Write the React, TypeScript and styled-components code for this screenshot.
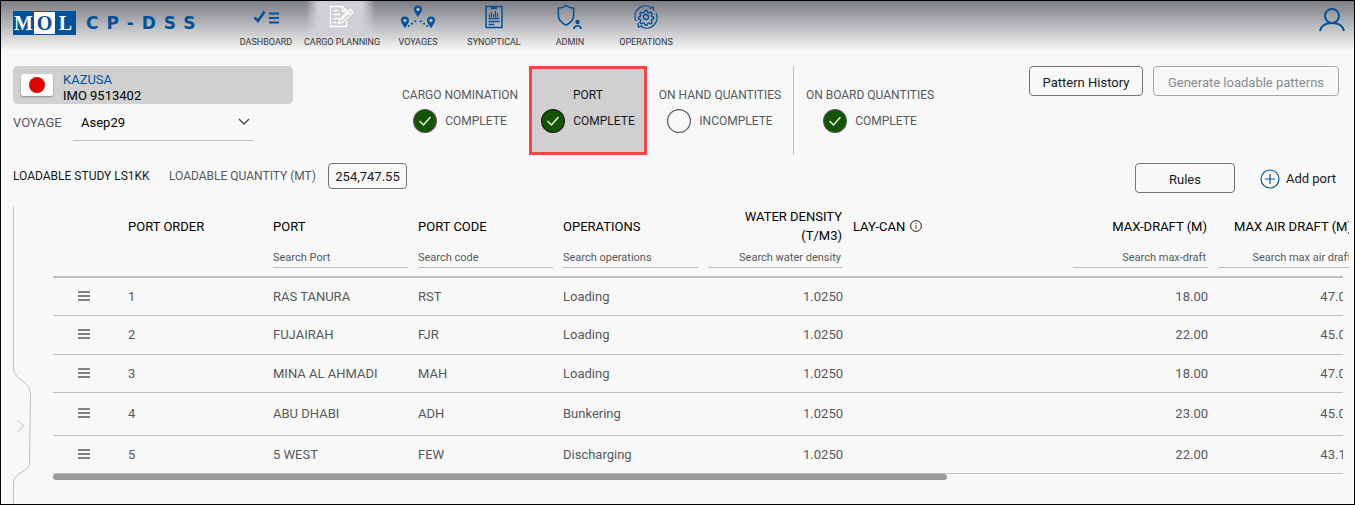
import React from "react";
import styled, { createGlobalStyle } from "styled-components";

const BLUE = "#00529c";
const LINE = "#bfbfbf";
const INK = "#16191d";
const MUTED = "#55585e";

const Global = createGlobalStyle`
  *, *::before, *::after { box-sizing: border-box; }
  body { margin: 0; background: #f8f8f8; }
  body, button, input, select { font-family: Roboto, "Liberation Sans", sans-serif; }
  body { font-size: 13px; color: ${MUTED}; }
`;

const Page = styled.div`
  min-height: 100vh;
  border: 1px solid #000;
  background: #f8f8f8;
  display: flex;
  flex-direction: column;
`;

const Header = styled.header`
  display: flex;
  align-items: flex-start;
  height: 50px;
  padding: 0 8px 0 12px;
  background: linear-gradient(to bottom, #7c7e85, #f8f8f8);
`;

const Brand = styled.a`
  display: flex;
  align-items: center;
  width: 215px;
  padding-top: 10px;
  text-decoration: none;
`;

const LogoBox = styled.span`
  display: grid;
  grid-template-columns: repeat(3, 21px);
  height: 24px;
  border: 1px solid ${BLUE};
  border-width: 1px 0;
  background: ${BLUE};
`;

const LogoLetter = styled.span<{ $inverse?: boolean }>`
  display: flex;
  align-items: center;
  justify-content: center;
  font: bold 20px/22px "Liberation Serif", serif;
  color: ${(p) => (p.$inverse ? BLUE : "#fff")};
  background: ${(p) => (p.$inverse ? "#fff" : BLUE)};
`;

const Product = styled.span`
  margin-left: 10px;
  font: bold 17px/24px "DejaVu Sans", sans-serif;
  letter-spacing: 8px;
  white-space: nowrap;
  color: ${BLUE};
`;

const Nav = styled.nav`
  display: flex;
`;

const NavLink = styled.a<{ $active?: boolean }>`
  display: flex;
  flex-direction: column;
  align-items: center;
  width: 76px;
  height: 48px;
  font-size: 9px;
  line-height: 12px;
  white-space: nowrap;
  color: #33363b;
  text-decoration: none;
  background: ${(p) =>
    p.$active
      ? "linear-gradient(to right, rgba(208,208,212,0) 2px, rgba(208,208,212,1) 14px, rgba(208,208,212,1) 58px, rgba(208,208,212,0) 72px) top / 100% 34px no-repeat"
      : "none"};
  svg { margin: 2px 0 6px; }
`;

const Profile = styled.button`
  margin: 5px 0 0 auto;
  padding: 0;
  border: 0;
  background: none;
`;

const Summary = styled.section`
  display: flex;
  align-items: flex-start;
  padding: 15px 15px 0 12px;
  height: 112px;
`;

const VesselPanel = styled.div`
  width: 280px;
`;

const Vessel = styled.div`
  display: flex;
  align-items: center;
  gap: 10px;
  height: 38px;
  padding: 0 8px;
  border-radius: 5px;
  background: #d0d0d0;
  color: #000;
  line-height: 16px;
`;

const VesselText = styled.div`
  padding-top: 5px;
`;

const VesselName = styled.div`
  color: ${BLUE};
`;

const Flag = styled.span`
  display: flex;
  align-items: center;
  justify-content: center;
  width: 32px;
  height: 22px;
  border-radius: 2px;
  background: #fff;
  box-shadow: 0 1px 2px rgba(0, 0, 0, 0.35);
  &::before {
    content: "";
    width: 16px;
    height: 16px;
    border-radius: 50%;
    background: #e00000;
  }
`;

const VoyageField = styled.div`
  display: grid;
  grid-template-columns: 60px 180px;
  align-items: center;
  height: 36px;
`;

const SelectBox = styled.span`
  display: flex;
  position: relative;
  height: 37px;
  border-bottom: 1px solid ${LINE};
  svg {
    position: absolute;
    right: 3px;
    top: 14px;
    pointer-events: none;
  }
`;

const Select = styled.select`
  appearance: none;
  width: 100%;
  padding: 0 24px 0 8px;
  border: 0;
  background: none;
  font-size: 13px;
  color: #000;
`;

const Steps = styled.div`
  display: flex;
  margin-left: 98px;
`;

const Step = styled.button<{ $width: number; $active?: boolean; $divided?: boolean }>`
  display: flex;
  flex-direction: column;
  align-items: center;
  gap: 8px;
  width: ${(p) => p.$width}px;
  height: 89px;
  padding: ${(p) => (p.$active ? "18px 0 0" : "21px 0 0")};
  border: ${(p) => (p.$active ? "3px solid #fa4343" : "0")};
  border-right: ${(p) => (p.$divided ? `1px solid ${LINE}` : p.$active ? "3px solid #fa4343" : "0")};
  background: ${(p) => (p.$active ? "#d0d0d0" : "none")};
  color: ${(p) => (p.$active ? INK : MUTED)};
  font-size: 12px;
  line-height: 16px;
  white-space: nowrap;
`;

const StepState = styled.span`
  display: flex;
  align-items: center;
  gap: 8px;
  height: 20px;
`;

const Buttons = styled.div`
  display: flex;
  gap: 10px;
  margin-left: auto;
`;

const Button = styled.button<{ $width: number }>`
  width: ${(p) => p.$width}px;
  height: 30px;
  padding: 2px 0 0;
  border: 1px solid #6c757d;
  border-radius: 4px;
  background: none;
  color: ${INK};
  font-size: 13px;
  white-space: nowrap;
  &:disabled {
    border-color: #a5a9ad;
    color: #868c94;
  }
`;

const StudyBar = styled.section`
  display: flex;
  align-items: flex-start;
  height: 44px;
  padding: 0 18px 0 12px;
  line-height: 26px;
  font-size: 12px;
`;

const StudyName = styled.span`
  width: 156px;
  color: ${INK};
`;

const QuantityLabel = styled.label`
  width: 159px;
`;

const Quantity = styled.input`
  width: 79px;
  height: 26px;
  padding: 0;
  border: 1px solid #6c757d;
  border-radius: 4px;
  background: none;
  color: ${INK};
  font-size: 13px;
  text-align: center;
`;

const StudyActions = styled.div`
  display: flex;
  gap: 25px;
  margin-left: auto;
`;

const AddPort = styled.button`
  display: flex;
  align-items: center;
  gap: 6px;
  height: 31px;
  padding: 0;
  border: 0;
  background: none;
  color: ${INK};
  font-size: 13px;
`;

const Workspace = styled.main`
  display: flex;
  flex: 1;
  min-width: 0;
`;

const Rail = styled.aside`
  display: flex;
  flex-direction: column;
  flex: none;
  width: 52px;
  padding-left: 12px;
`;

const RailLine = styled.span<{ $grow?: boolean }>`
  flex: ${(p) => (p.$grow ? "1" : "none")};
  height: ${(p) => (p.$grow ? "auto" : "162px")};
  min-height: 8px;
  width: 1px;
  background: ${LINE};
`;

const RailHandle = styled.button`
  display: block;
  width: 20px;
  height: 114px;
  padding: 0;
  border: 0;
  background: none;
  svg { display: block; }
`;

const TableArea = styled.div`
  flex: 1;
  min-width: 0;
  padding-right: 5px;
`;

const Table = styled.table`
  display: block;
  text-align: left;
`;

const Head = styled.thead`
  display: block;
  overflow: hidden;
`;

const Body = styled.tbody`
  display: block;
  overflow: hidden;
  margin-right: 6px;
  border-top: 2px solid ${LINE};
`;

const Row = styled.tr<{ $height?: number }>`
  display: grid;
  grid-template-columns: 65px repeat(5, 145px) 220px repeat(2, 145px);
  align-items: center;
  height: ${(p) => (p.$height ? `${p.$height}px` : "auto")};
  border-bottom: ${(p) => (p.$height ? `1px solid ${LINE}` : "0")};
`;

const Th = styled.th<{ $end?: boolean }>`
  display: flex;
  flex-direction: column;
  height: 69px;
  padding-left: 10px;
  text-align: ${(p) => (p.$end ? "right" : "left")};
  font-weight: 400;
  font-size: 13px;
  line-height: 19px;
  color: #000;
`;

const Title = styled.span`
  display: flex;
  flex-direction: column;
  justify-content: center;
  height: 36px;
`;

const TitleLine = styled.span`
  display: flex;
  align-items: center;
  gap: 5px;
  white-space: nowrap;
`;

const Filter = styled.input<{ $end?: boolean }>`
  width: 135px;
  height: 22px;
  margin-top: 2px;
  padding: 1px ${(p) => (p.$end ? "2px" : "0")} 0 0;
  border: 0;
  border-bottom: 1px solid ${LINE};
  border-radius: 0;
  background: none;
  font-size: 11px;
  text-align: ${(p) => (p.$end ? "right" : "left")};
  &::placeholder { color: ${MUTED}; opacity: 1; }
`;

const Td = styled.td<{ $end?: boolean }>`
  padding: 0 0 0 10px;
  text-align: ${(p) => (p.$end ? "right" : "left")};
  font-size: 13px;
  line-height: 16px;
`;

const GripCell = styled.td`
  padding: 0 0 2px 24px;
  svg { display: block; }
`;

const ScrollThumb = styled.div`
  width: 69%;
  height: 6px;
  border-radius: 3px;
  background: #999;
`;

const Dashboard = () => (
  <svg width="28" height="27" viewBox="0 0 28 27" fill="none" stroke={BLUE}>
    <path d="M2.500 14.500l3.500 3.500L12.500 8.500" strokeWidth="2.600" />
    <path d="M17 10.500h10M17 15h10M17 19.500h10" strokeWidth="2" />
  </svg>
);

const Planning = () => (
  <svg width="28" height="27" viewBox="0 0 28 27" fill="none" stroke="#fff" strokeWidth="1.300">
    <path d="M14.500 3.500H2.500v20h16v-6M18.500 9V7.500l-4-4V8h4" />
    <path d="M5.500 7.500h4M5.500 11.500h4M8 11.500h4M5.500 15.500h6M5.500 19.500h3" />
    <path d="M11.500 16.500L22 6.500l3 3L14.500 19.500l-4 1zM20 8.500l3 3M13 17l8-7.500" />
  </svg>
);

const Voyages = () => (
  <svg width="36" height="27" viewBox="0 0 36 27">
    {[[18, 6.500], [5, 17.500], [31, 17.500]].map(([x, y]) => (
      <g key={x}>
        <path d={`M${x} ${y + 8}c-1-3-4-5-4-8a4 4 0 0 1 8 0c0 3-3 5-4 8z`} fill={BLUE} />
        <circle cx={x} cy={y} r="1.700" fill="#b9babd" />
      </g>
    ))}
    <path d="M8 23.500L17 17M28 23.500L19 17" stroke={BLUE} strokeWidth="1.800" strokeDasharray="1.800 2.200" />
  </svg>
);

const Synoptical = () => (
  <svg width="28" height="27" viewBox="0 0 28 27" fill="none" stroke={BLUE}>
    <path d="M6 3.500h16v21H6z" strokeWidth="1.500" />
    <path d="M11 5h6" strokeWidth="2.200" />
    <path d="M8.500 15.500h11M8.500 18.500h11M8.500 21.500h6" strokeWidth="1.300" />
    <path d="M9.500 14v-3M11.500 14V9M13.500 14v-3M15.500 14V8M17.500 14v-4" strokeWidth="1.200" />
  </svg>
);

const Admin = () => (
  <svg width="28" height="27" viewBox="0 0 28 27" fill="none" stroke={BLUE} strokeWidth="1.600">
    <path d="M10 2.500c2 1.700 4.500 2.500 7.700 2.700v6.500c0 5-3.200 8.300-7.700 10.300-4.500-2-7.700-5.300-7.700-10.300V5.200C5.500 5 8 4.200 10 2.500z" />
    <circle cx="21.500" cy="19" r="1.400" fill={BLUE} />
    <path d="M18 26v-.5c0-1.600 1.400-2.500 3.500-2.500s3.500.9 3.500 2.500v.5" />
  </svg>
);

const Operations = () => (
  <svg width="28" height="27" viewBox="0 0 28 27" fill="none" stroke={BLUE} strokeWidth="1.300">
    <circle cx="14" cy="14" r="2.500" />
    <path d="M12.800 7.500h2.400l.5 2 1.500.7 1.800-1 1.700 1.700-1 1.800.7 1.500 1.800.4v2l-1.800.5-.7 1.400 1 1.800-1.700 1.600-1.800-1-1.500.6-.5 1.600h-2.400l-.5-1.600-1.500-.6-1.800 1-1.700-1.600 1-1.800-.7-1.400-1.800-.5v-2l1.800-.4.7-1.500-1-1.800 1.700-1.700 1.800 1 1.500-.7z" strokeWidth="1.400" transform="translate(1 .5) scale(.93)" />
    <path d="M4 18A10.500 10.500 0 0 1 19 4.500M9 23.500A10.500 10.500 0 0 0 24 10M22 8l-1-4-3.500 2M6 20l.5 4 4-1.500" />
  </svg>
);

const Person = () => (
  <svg width="28" height="27" viewBox="0 0 28 27" fill="none" stroke={BLUE} strokeWidth="2">
    <circle cx="14" cy="10" r="7" />
    <path d="M2 25c1-5 5.500-8 12-8s11 3 12 8" />
  </svg>
);

const Chevron = () => (
  <svg width="12" height="8" viewBox="0 0 12 8" fill="none" stroke="#444" strokeWidth="1.300">
    <path d="M1 1l5 5 5-5" />
  </svg>
);

const Mark = ({ done }: { done: boolean }) => (
  <svg width="24" height="24" viewBox="0 0 24 24" fill="none">
    <circle cx="12" cy="12" r="11.400" fill={done ? "#125400" : "#f8f8f8"} stroke="currentColor" strokeWidth="1.200" />
    {done && <path d="M6.500 12l4 4 7-8" stroke="#e8efe6" strokeWidth="1.500" />}
  </svg>
);

const Plus = () => (
  <svg width="20" height="20" viewBox="0 0 20 20" fill="none" stroke={BLUE} strokeWidth="1.200">
    <circle cx="10" cy="10" r="9" />
    <path d="M10 5v10M5 10h10" />
  </svg>
);

const Info = () => (
  <svg width="12" height="12" viewBox="0 0 12 12" fill="none" stroke="#222">
    <circle cx="6" cy="6" r="5.400" />
    <path d="M6 5v4M6 2.800v1.200" stroke="#a05a10" strokeWidth="1.200" />
  </svg>
);

const Grip = () => (
  <svg width="24" height="12" viewBox="0 0 24 12" stroke="#55585e" strokeWidth="1.300">
    <path d="M0 2h12M0 6h12M0 10h12" transform="translate(1 0)" />
  </svg>
);

const navItems = [
  { label: "DASHBOARD", icon: <Dashboard /> },
  { label: "CARGO PLANNING", icon: <Planning />, active: true },
  { label: "VOYAGES", icon: <Voyages /> },
  { label: "SYNOPTICAL", icon: <Synoptical /> },
  { label: "ADMIN", icon: <Admin /> },
  { label: "OPERATIONS", icon: <Operations /> },
];

const steps = [
  { label: "CARGO NOMINATION", done: true, width: 138 },
  { label: "PORT", done: true, width: 118, active: true },
  { label: "ON HAND QUANTITIES", done: false, width: 147, divided: true },
  { label: "ON BOARD QUANTITIES", done: true, width: 152 },
];

type Column = { title: string[]; filter?: string; end?: boolean; info?: boolean };

const columns: Column[] = [
  { title: ["PORT ORDER"] },
  { title: ["PORT"], filter: "Search Port" },
  { title: ["PORT CODE"], filter: "Search code" },
  { title: ["OPERATIONS"], filter: "Search operations" },
  { title: ["WATER DENSITY", "(T/M3)"], filter: "Search water density", end: true },
  { title: ["LAY-CAN"], info: true },
  { title: ["MAX-DRAFT (M)"], filter: "Search max-draft", end: true },
  { title: ["MAX AIR DRAFT (M)"], filter: "Search max air draft", end: true },
];

const rows = [
  { height: 38, cells: ["1", "RAS TANURA", "RST", "Loading", "1.0250", "", "18.00", "47.00"] },
  { height: 39, cells: ["2", "FUJAIRAH", "FJR", "Loading", "1.0250", "", "22.00", "45.00"] },
  { height: 38, cells: ["3", "MINA AL AHMADI", "MAH", "Loading", "1.0250", "", "18.00", "47.00"] },
  { height: 43, cells: ["4", "ABU DHABI", "ADH", "Bunkering", "1.0250", "", "23.00", "45.00"] },
  { height: 38, cells: ["5", "5 WEST", "FEW", "Discharging", "1.0250", "", "22.00", "43.10"] },
];

export default function App() {
  return (
    <Page>
      <Global />
      <Header>
        <Brand href="#">
          <LogoBox>
            <LogoLetter>M</LogoLetter>
            <LogoLetter $inverse>O</LogoLetter>
            <LogoLetter>L</LogoLetter>
          </LogoBox>
          <Product>CP-DSS</Product>
        </Brand>
        <Nav>
          {navItems.map((item) => (
            <NavLink key={item.label} href="#" $active={item.active}>
              {item.icon}
              {item.label}
            </NavLink>
          ))}
        </Nav>
        <Profile aria-label="Profile">
          <Person />
        </Profile>
      </Header>

      <Summary>
        <VesselPanel>
          <Vessel>
            <Flag />
            <VesselText>
              <VesselName>KAZUSA</VesselName>
              <div>IMO 9513402</div>
            </VesselText>
          </Vessel>
          <VoyageField>
            <label htmlFor="voyage">VOYAGE</label>
            <SelectBox>
              <Select id="voyage">
                <option>Asep29</option>
              </Select>
              <Chevron />
            </SelectBox>
          </VoyageField>
        </VesselPanel>
        <Steps>
          {steps.map((step) => (
            <Step key={step.label} $width={step.width} $active={step.active} $divided={step.divided}>
              {step.label}
              <StepState>
                <Mark done={step.done} />
                {step.done ? "COMPLETE" : "INCOMPLETE"}
              </StepState>
            </Step>
          ))}
        </Steps>
        <Buttons>
          <Button $width={114}>Pattern History</Button>
          <Button $width={186} disabled>
            Generate loadable patterns
          </Button>
        </Buttons>
      </Summary>

      <StudyBar>
        <StudyName>LOADABLE STUDY LS1KK</StudyName>
        <QuantityLabel htmlFor="quantity">LOADABLE QUANTITY (MT)</QuantityLabel>
        <Quantity id="quantity" defaultValue="254,747.55" />
        <StudyActions>
          <Button $width={100}>Rules</Button>
          <AddPort>
            <Plus />
            Add port
          </AddPort>
        </StudyActions>
      </StudyBar>

      <Workspace>
        <Rail>
          <RailLine />
          <RailHandle aria-label="Expand side panel">
            <svg width="20" height="114" viewBox="0 0 20 114" fill="none" stroke={LINE}>
              <path d="M.5 0c0 10 17 13 17 24L16.500 94c0 9-16 9-16 20" />
              <path d="M4.500 51l6 6-6 6" />
            </svg>
          </RailHandle>
          <RailLine $grow />
        </Rail>
        <TableArea>
          <Table>
            <Head>
              <Row>
                <Th aria-label="Reorder" />
                {columns.map((column) => (
                  <Th key={column.title[0]} $end={column.end}>
                    <Title>
                      {column.info ? (
                        <TitleLine>
                          {column.title[0]}
                          <Info />
                        </TitleLine>
                      ) : (
                        column.title.map((line) => <span key={line}>{line}</span>)
                      )}
                    </Title>
                    {column.filter && (
                      <Filter placeholder={column.filter} aria-label={column.filter} $end={column.end} />
                    )}
                  </Th>
                ))}
              </Row>
            </Head>
            <Body>
              {rows.map((row) => (
                <Row key={row.cells[0]} $height={row.height}>
                  <GripCell>
                    <Grip />
                  </GripCell>
                  {row.cells.map((cell, i) => (
                    <Td key={columns[i].title[0]} $end={columns[i].end}>
                      {cell}
                    </Td>
                  ))}
                </Row>
              ))}
            </Body>
          </Table>
          <ScrollThumb />
        </TableArea>
      </Workspace>
    </Page>
  );
}
